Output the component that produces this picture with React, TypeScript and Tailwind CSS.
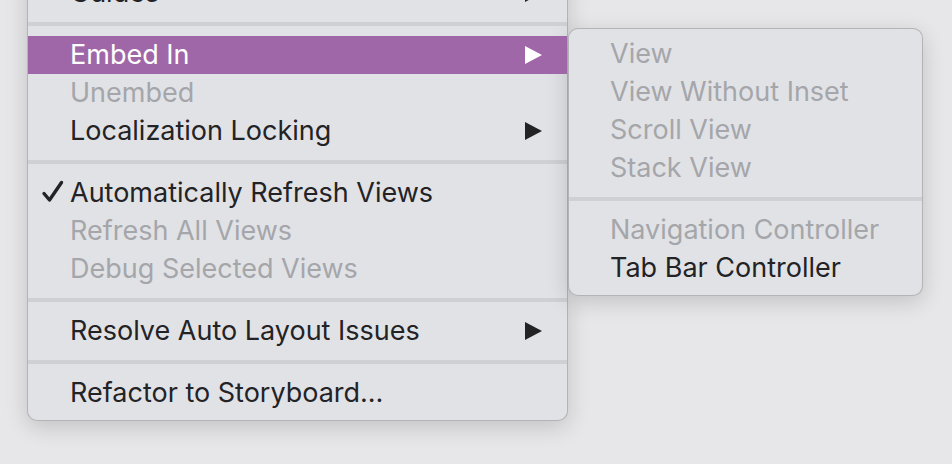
import type { ReactNode } from "react";

type Item =
  | { kind: "sep" }
  | {
      kind: "item";
      label: string;
      disabled?: boolean;
      checked?: boolean;
      submenu?: boolean;
      active?: boolean;
    };

const MAIN_ITEMS: Item[] = [
  { kind: "item", label: "Guides", submenu: true },
  { kind: "sep" },
  { kind: "item", label: "Embed In", submenu: true, active: true },
  { kind: "item", label: "Unembed", disabled: true },
  { kind: "item", label: "Localization Locking", submenu: true },
  { kind: "sep" },
  { kind: "item", label: "Automatically Refresh Views", checked: true },
  { kind: "item", label: "Refresh All Views", disabled: true },
  { kind: "item", label: "Debug Selected Views", disabled: true },
  { kind: "sep" },
  { kind: "item", label: "Resolve Auto Layout Issues", submenu: true },
  { kind: "sep" },
  { kind: "item", label: "Refactor to Storyboard…" },
];

const EMBED_ITEMS: Item[] = [
  { kind: "item", label: "View", disabled: true },
  { kind: "item", label: "View Without Inset", disabled: true },
  { kind: "item", label: "Scroll View", disabled: true },
  { kind: "item", label: "Stack View", disabled: true },
  { kind: "sep" },
  { kind: "item", label: "Navigation Controller", disabled: true },
  { kind: "item", label: "Tab Bar Controller" },
];

function Arrow({ color }: { color: string }) {
  return (
    <svg width="17" height="18" viewBox="0 0 17 18" className="shrink-0">
      <polygon points="0,0 0,18 17,9" fill={color} />
    </svg>
  );
}

function Check() {
  return (
    <svg width="24" height="24" viewBox="0 0 24 24" className="absolute left-[13px] top-[6px]">
      <path
        d="M3 13.5 L8.5 20 L20.5 2.5"
        fill="none"
        stroke="#232326"
        strokeWidth="3.4"
        strokeLinecap="round"
        strokeLinejoin="round"
      />
    </svg>
  );
}

function MenuRows({ items, indent }: { items: Item[]; indent: string }) {
  const rows: ReactNode[] = items.map((it, i) => {
    if (it.kind === "sep") {
      return (
        <div key={i} className="h-[24px] flex items-center">
          <div className="h-[4px] w-full bg-[#cfd0d4]" />
        </div>
      );
    }
    const textColor = it.active
      ? "text-white"
      : it.disabled
        ? "text-[#a5a6aa]"
        : "text-[#232326]";
    return (
      <div
        key={i}
        className={`relative h-[38px] flex items-center pr-[25px] ${indent} ${
          it.active ? "bg-[#a067a8]" : ""
        }`}
      >
        {it.checked && <Check />}
        <span className={`flex-1 whitespace-nowrap text-[27px] leading-none pb-[2px] ${textColor}`}>
          {it.label}
        </span>
        {it.submenu && <Arrow color={it.active ? "#ffffff" : "#232326"} />}
      </div>
    );
  });
  return <>{rows}</>;
}

export default function App() {
  return (
    <div className="w-[952px] h-[464px] overflow-hidden bg-[#e7e7e9] flex items-start pl-[27px] font-['Inter','Noto_Sans',sans-serif]">
      <div className="w-[541px] -mt-[27px] pb-[8px] rounded-[10px] bg-[#e1e2e6] border border-black/20 shadow-[0_6px_22px_rgba(0,0,0,0.16)]">
        <MenuRows items={MAIN_ITEMS} indent="pl-[42px]" />
      </div>
      <div className="w-[355px] mt-[28px] pt-[6px] pb-[8px] rounded-[10px] bg-[#e1e2e6] border border-black/20 shadow-[0_6px_22px_rgba(0,0,0,0.16)]">
        <MenuRows items={EMBED_ITEMS} indent="pl-[41px]" />
      </div>
    </div>
  );
}
